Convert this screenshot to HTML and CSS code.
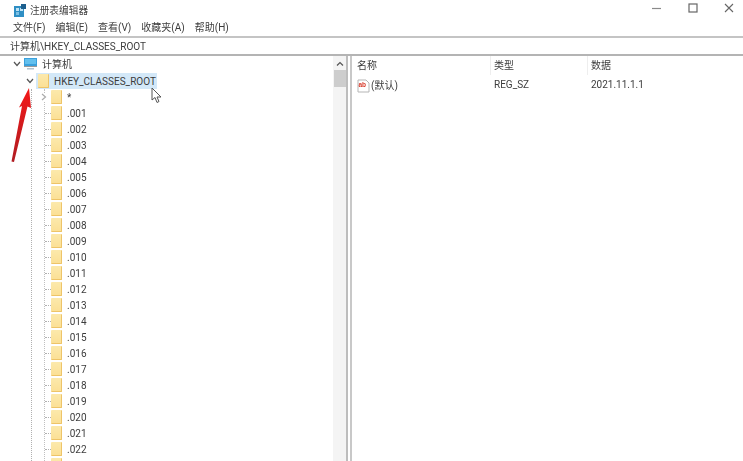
FILE: index.html
```html
<!DOCTYPE html>
<html lang="zh-CN">
<head>
    <meta charset="UTF-8">
    <title>注册表编辑器</title>
    <link rel="stylesheet" href="styles.css">
</head>
<body>
    <div class="window">
        <div class="titlebar">
            <svg class="app-icon" width="12" height="13" viewBox="0 0 12 13">
                <rect x="0" y="2" width="10" height="11" fill="#2f8fc4"/>
                <rect x="2" y="4" width="3" height="3" fill="#bfe3f5"/>
                <rect x="6" y="4" width="3" height="3" fill="#bfe3f5"/>
                <rect x="2" y="8" width="3" height="3" fill="#7cc0e4"/>
                <rect x="7" y="0" width="5" height="5" fill="#1d5f8e"/>
            </svg>
            <span class="title">注册表编辑器</span>
            <div class="win-controls">
                <svg width="10" height="10" viewBox="0 0 10 10"><path d="M0 5.5H9" stroke="#8a8a8a" stroke-width="1.2"/></svg>
                <svg width="10" height="10" viewBox="0 0 10 10"><rect x="1" y="1" width="8" height="8" fill="none" stroke="#666" stroke-width="1.2"/></svg>
                <svg width="10" height="10" viewBox="0 0 10 10"><path d="M1 1L9 9M9 1L1 9" stroke="#666" stroke-width="1.1"/></svg>
            </div>
        </div>

        <div class="menubar">
            <span>文件(F)</span>
            <span>编辑(E)</span>
            <span>查看(V)</span>
            <span>收藏夹(A)</span>
            <span>帮助(H)</span>
        </div>

        <div class="address">计算机\HKEY_CLASSES_ROOT</div>

        <div class="panes">
            <div class="tree-pane">
                <div class="tree">
                    <div class="row row-computer">
                        <svg class="chev" width="8" height="6" viewBox="0 0 8 6"><path d="M1 1L4 4.5L7 1" fill="none" stroke="#555" stroke-width="1.2"/></svg>
                        <svg class="pc" width="13" height="12" viewBox="0 0 13 12">
                            <rect x="0" y="0" width="13" height="8" fill="#3aa0dc"/>
                            <rect x="1" y="1" width="11" height="5" fill="#63c0ee"/>
                            <rect x="0" y="8" width="13" height="1" fill="#9a9a9a"/>
                            <rect x="3" y="10" width="7" height="1.5" fill="#b5c4cf"/>
                        </svg>
                        <span>计算机</span>
                    </div>
                    <div class="row row-root">
                        <svg class="chev" width="8" height="6" viewBox="0 0 8 6"><path d="M1 1L4 4.5L7 1" fill="none" stroke="#555" stroke-width="1.2"/></svg>
                        <div class="selected">
                            <i class="folder"></i>
                            <span>HKEY_CLASSES_ROOT</span>
                        </div>
                    </div>
                    <div class="level-1">
                        <div class="level-2">
                            <div class="row row-star">
                                <svg class="chev-right" width="6" height="8" viewBox="0 0 6 8"><path d="M1 1L4.5 4L1 7" fill="none" stroke="#aaa" stroke-width="1.2"/></svg>
                                <i class="folder"></i><span>*</span>
                            </div>
                            <div class="row key"><i class="folder"></i><span>.001</span></div>
                            <div class="row key"><i class="folder"></i><span>.002</span></div>
                            <div class="row key"><i class="folder"></i><span>.003</span></div>
                            <div class="row key"><i class="folder"></i><span>.004</span></div>
                            <div class="row key"><i class="folder"></i><span>.005</span></div>
                            <div class="row key"><i class="folder"></i><span>.006</span></div>
                            <div class="row key"><i class="folder"></i><span>.007</span></div>
                            <div class="row key"><i class="folder"></i><span>.008</span></div>
                            <div class="row key"><i class="folder"></i><span>.009</span></div>
                            <div class="row key"><i class="folder"></i><span>.010</span></div>
                            <div class="row key"><i class="folder"></i><span>.011</span></div>
                            <div class="row key"><i class="folder"></i><span>.012</span></div>
                            <div class="row key"><i class="folder"></i><span>.013</span></div>
                            <div class="row key"><i class="folder"></i><span>.014</span></div>
                            <div class="row key"><i class="folder"></i><span>.015</span></div>
                            <div class="row key"><i class="folder"></i><span>.016</span></div>
                            <div class="row key"><i class="folder"></i><span>.017</span></div>
                            <div class="row key"><i class="folder"></i><span>.018</span></div>
                            <div class="row key"><i class="folder"></i><span>.019</span></div>
                            <div class="row key"><i class="folder"></i><span>.020</span></div>
                            <div class="row key"><i class="folder"></i><span>.021</span></div>
                            <div class="row key"><i class="folder"></i><span>.022</span></div>
                            <div class="row key"><i class="folder"></i></div>
                        </div>
                    </div>
                </div>
                <div class="scrollbar">
                    <svg width="8" height="6" viewBox="0 0 8 6"><path d="M1 4.5L4 1.5L7 4.5" fill="none" stroke="#555" stroke-width="1.2"/></svg>
                    <div class="thumb"></div>
                </div>
            </div>

            <div class="splitter"></div>

            <div class="list-pane">
                <div class="list-head">
                    <span class="col-name">名称</span>
                    <span class="col-type">类型</span>
                    <span class="col-data">数据</span>
                </div>
                <div class="list-row">
                    <span class="col-name">
                        <svg width="13" height="14" viewBox="0 0 13 14">
                            <path d="M1 1H9L12 4V13H1Z" fill="#fff" stroke="#b5b5b5"/>
                            <text x="1.5" y="8" class="ab-text">ab</text>
                        </svg>
                        (默认)
                    </span>
                    <span class="col-type">REG_SZ</span>
                    <span class="col-data">2021.11.1.1</span>
                </div>
            </div>
        </div>

        <svg class="arrow" width="24" height="77" viewBox="0 0 24 77">
            <defs>
                <linearGradient id="arrowFill" x1="0" y1="0" x2="0" y2="1">
                    <stop offset="0" stop-color="#f41818"/>
                    <stop offset="1" stop-color="#b01c22"/>
                </linearGradient>
            </defs>
            <path d="M20 1L22 21L18.500 19.500L5 75L2.500 74.500L13 19L10 20.500Z" fill="url(#arrowFill)"/>
        </svg>

        <svg class="cursor" width="12" height="17" viewBox="0 0 12 17">
            <path d="M1 1V13L4 10.500L6 15.500L8 14.500L6 10H10Z" fill="#fff" stroke="#555" stroke-width="1"/>
        </svg>
    </div>
</body>
</html>
```

FILE: styles.css
```css
* {
    margin: 0;
    padding: 0;
    box-sizing: border-box;
}

html, body {
    height: 100%;
    overflow: hidden;
    background-color: white;
}

body {
    font-family: Roboto, "Noto Sans CJK SC", sans-serif;
    font-size: 10px;
    color: #3c3c3c;
}

.window {
    position: relative;
    display: flex;
    flex-direction: column;
    height: 461px;
    filter: blur(0.5px);
}

.titlebar {
    display: flex;
    align-items: center;
    height: 20px;
    padding-left: 14px;
    flex-shrink: 0;
}

.app-icon {
    margin-right: 4px;
}

.title {
    font-size: 9.7px;
    color: #444;
}

.win-controls {
    display: flex;
    gap: 26px;
    margin-left: auto;
    margin-right: 9px;
    align-self: flex-start;
    margin-top: 3px;
}

.menubar {
    display: flex;
    gap: 10px;
    height: 16px;
    padding-left: 13px;
    line-height: 16px;
    flex-shrink: 0;
}

.address {
    height: 18px;
    padding-left: 10px;
    line-height: 17px;
    border-top: 2px solid #c4c4c4;
    flex-shrink: 0;
}

.panes {
    display: flex;
    flex: 1;
    min-height: 0;
    border-top: 2px solid #b4b4b4;
}

.tree-pane {
    display: flex;
    width: 346px;
    flex-shrink: 0;
    overflow: hidden;
}

.tree {
    flex: 1;
    overflow: hidden;
}

.row {
    display: flex;
    align-items: center;
    height: 16px;
}

.row-computer {
    height: 15px;
    padding-left: 13px;
}

.row-computer .chev {
    margin-right: 3px;
}

.row-computer span {
    margin-left: 4px;
}

.row-root {
    height: 18px;
    padding-left: 26px;
    align-items: flex-end;
}

.row-root .chev {
    margin-right: 2px;
    margin-bottom: 5px;
}

.selected {
    display: flex;
    align-items: center;
    width: 121px;
    height: 16px;
    padding-left: 2px;
    background-color: #d3e8f8;
}

.selected span {
    margin-left: 5px;
}

.folder {
    display: block;
    width: 11px;
    height: 14px;
    flex-shrink: 0;
    background: linear-gradient(#fce9ac, #fbe096);
    border-right: 1px solid #eec468;
    border-bottom: 1px solid #eec468;
    border-radius: 1px;
}

.row > span {
    margin-left: 5px;
}

.level-1 {
    margin-left: 31px;
    border-left: 1px dotted #b0b0b0;
}

.level-2 {
    margin-left: 12px;
    border-left: 1px dotted #c0c0c0;
}

.row-star .chev-right {
    margin-left: -4px;
    margin-right: 4px;
    background-color: white;
}

.key::before {
    content: "";
    width: 6px;
    border-top: 1px dotted #b0b0b0;
}

.scrollbar {
    display: flex;
    flex-direction: column;
    align-items: center;
    width: 13px;
    padding-top: 5px;
    background-color: #f4f4f4;
}

.thumb {
    width: 12px;
    height: 17px;
    margin-top: 3px;
    background-color: #cdcdcd;
}

.splitter {
    width: 6px;
    flex-shrink: 0;
    background-color: white;
    border-left: 2px solid #bdbdbd;
    border-right: 2px solid #c8c8c8;
}

.list-pane {
    flex: 1;
    min-width: 0;
}

.list-head, .list-row {
    display: grid;
    grid-template-columns: 133px 97px 1fr;
    padding-left: 5px;
}

.list-head {
    height: 17px;
    line-height: 19px;
}

.list-head span + span {
    border-left: 1px solid #eeeeee;
    padding-left: 3px;
}

.list-row {
    height: 17px;
    line-height: 16px;
    margin-top: 4px;
}

.list-row .col-type, .list-row .col-data {
    padding-left: 4px;
}

.list-row .col-name {
    display: flex;
    align-items: center;
    gap: 1px;
}

.ab-text {
    font-family: "Liberation Sans", sans-serif;
    font-size: 6.5px;
    font-weight: bold;
    fill: #d83a2a;
}

.arrow {
    position: absolute;
    left: 9px;
    top: 87px;
}

.cursor {
    position: absolute;
    left: 151px;
    top: 87px;
}
```
